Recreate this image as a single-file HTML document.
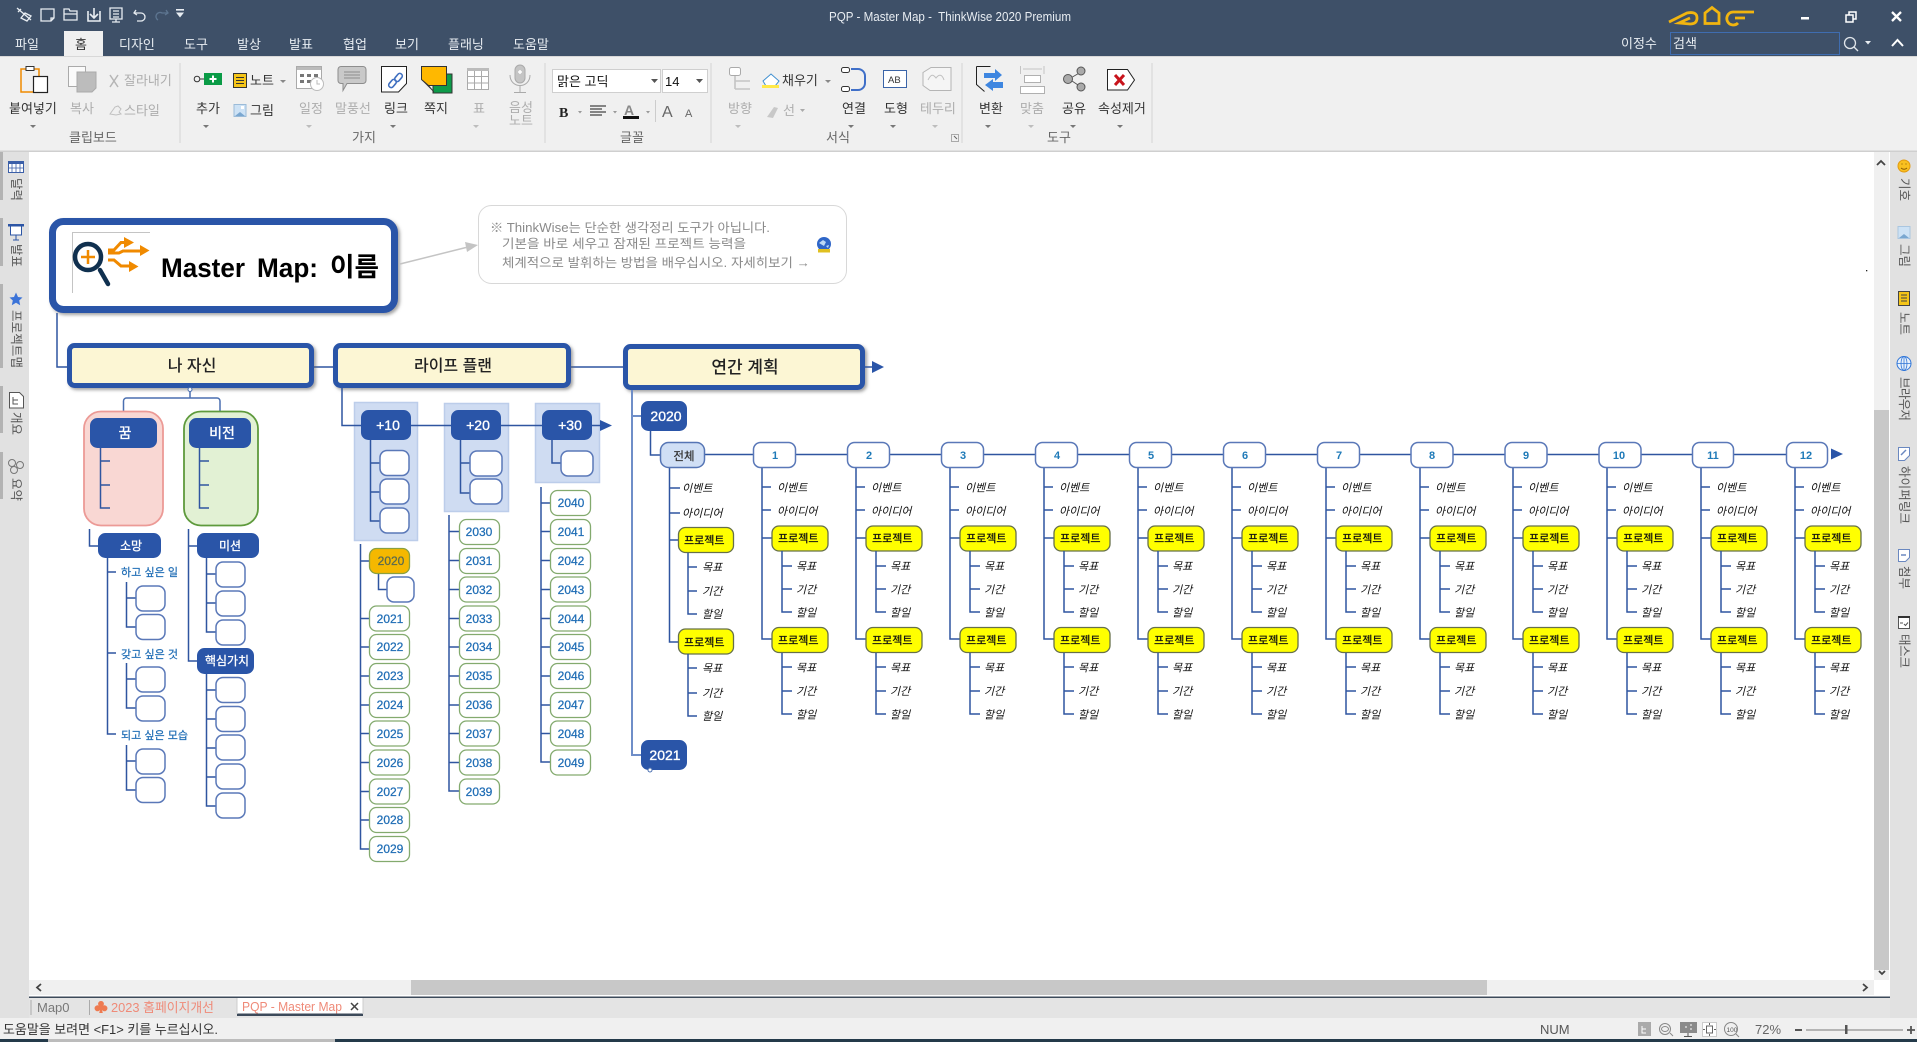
<!DOCTYPE html>
<html lang="ko"><head><meta charset="utf-8"><title>PQP - Master Map - ThinkWise 2020 Premium</title>
<style>
html,body{margin:0;padding:0;background:#fff;overflow:hidden}
svg{display:block;position:absolute;left:0;top:0}
text{font-family:"Liberation Sans","Noto Sans CJK KR",sans-serif;font-size:13px;fill:#333;white-space:pre}
.c{text-anchor:middle}
.m{fill:#e8edf2}
.g{fill:#adadad}
.lb{fill:#666}
.l{fill:none;stroke:#2f55a0;stroke-width:1.5}
.w{fill:#fff;stroke:#5a78b8;stroke-width:1.5;rx:7px}
.y{fill:#fff;stroke:#83aa6e;stroke-width:1.3;rx:7px}
.yt{font-size:12px;fill:#1f6db5;text-anchor:middle;stroke:#1f6db5;stroke-width:.25}
.n{fill:#2a55a8;stroke:#2a55a8;rx:7px}
.nt{fill:#fff;font-size:12px;text-anchor:middle;stroke:#fff;stroke-width:.3}
.nb{fill:#fff;font-size:14px;text-anchor:middle;stroke:#fff;stroke-width:.35}
.big{fill:#fcf6d4;stroke:#2a55a8;stroke-width:5;rx:5px;filter:url(#s)}
.bt{font-size:16px;fill:#222;text-anchor:middle;font-weight:500}
.i{font-size:11px;font-style:italic;fill:#111}
.p{fill:#ffff00;stroke:#66704a;stroke-width:1.3;rx:7px}
.pt{font-size:11px;fill:#111;stroke:#111;stroke-width:.25}
.bl{font-size:11px;fill:#1f6db5;stroke:#1f6db5;stroke-width:.2}
.nm{font-size:11px;fill:#1f7ab8;font-weight:bold;text-anchor:middle}
.call{font-size:12.5px;fill:#8a8a8a}
.sd{font-size:12.5px;fill:#555}
</style></head><body>
<svg width="1917" height="1042" viewBox="0 0 1917 1042" xmlns="http://www.w3.org/2000/svg">
<defs>
<filter id="s" x="-5%" y="-15%" width="112%" height="135%"><feDropShadow dx="2" dy="2" stdDeviation="1.5" flood-color="#666" flood-opacity=".6"/></filter>
<g id="col">
<path class="l" d="M762 467V639H772M762 487H771M762 510H771M762 538H772"/>
<text class="i" x="777" y="491.500">이벤트</text>
<text class="i" x="777" y="515">아이디어</text>
<rect class="p" x="772" y="526" width="56" height="25"/><text class="pt" x="778" y="542">프로젝트</text>
<path class="l" d="M782 551V612H792M782 566H792M782 589H792"/>
<text class="i" x="796" y="570">목표</text><text class="i" x="796" y="593.500">기간</text><text class="i" x="796" y="616.500">할일</text>
<rect class="p" x="772" y="627.500" width="56" height="25"/><text class="pt" x="778" y="644">프로젝트</text>
<path class="l" d="M782 653V714H792M782 667H792M782 691H792"/>
<text class="i" x="796" y="671.500">목표</text><text class="i" x="796" y="695">기간</text><text class="i" x="796" y="718.500">할일</text>
</g>
</defs>

<!-- canvas bg -->
<rect width="1917" height="1042" fill="#fff"/>
<!-- title bar -->
<rect width="1917" height="56" fill="#3e5068"/>
<!-- QAT -->
<g fill="none" stroke="#e8edf2" stroke-width="1.300">
<path d="M17 8l14 12M21 9l-3 3M25 13l-4 5 6 3 4-5z"/>
<path d="M41 9h13v9l-3 3H41zM51 21v-3h3"/>
<path d="M64 11v9h13v-9h-7l-1-2h-5zM64 14h13"/>
<path d="M88 11v10h12V11M94 8v10M90 14l4 4 4-4" stroke-width="1.600"/>
<path d="M110 8h12v11h-12zM116 19v3M112 22h8M113 11h6M113 14h6M113 17h6"/>
<path d="M136 10l-2 3 3 2M134 13h7a4 4 0 0 1 0 8h-4"/>
</g>
<path d="M166 10l2 3-3 2M168 13h-6a4 4 0 0 0-4 7" fill="none" stroke="#5d7590" stroke-width="1.300"/>
<path d="M176 9h8v1.600h-8zM176 12.500h8l-4 5z" fill="#e8edf2"/>
<!-- menu -->
<rect x="64" y="31" width="39" height="26" fill="#f0f0f0"/>
<text class="m" x="15" y="49">파일</text>
<text x="75" y="49">홈</text>
<text class="m" x="119" y="49">디자인</text>
<text class="m" x="184" y="49">도구</text>
<text class="m" x="237" y="49">발상</text>
<text class="m" x="289" y="49">발표</text>
<text class="m" x="343" y="49">협업</text>
<text class="m" x="395" y="49">보기</text>
<text class="m" x="448" y="49">플래닝</text>
<text class="m" x="513" y="49">도움말</text>
<text class="m" x="829" y="21" textLength="242" lengthAdjust="spacingAndGlyphs">PQP - Master Map -  ThinkWise 2020 Premium</text>
<!-- logo -->
<g fill="none" stroke="#f2b50f" stroke-width="2.800">
<path d="M1669 22L1687 13Q1697 11 1697 18Q1697 24 1690 24L1679 23L1690 18"/>
<path d="M1705 23.500V13l7-5.500 7 5.500v10.500z"/>
<path d="M1754 12H1733a6.500 6.500 0 1 0 5 11M1735 18h10"/>
</g>
<!-- window buttons -->
<rect x="1801" y="17" width="8" height="2.500" fill="#fff"/>
<path d="M1846 15h7v7h-7zM1849 15v-3h7v7h-3" fill="none" stroke="#fff" stroke-width="1.500"/>
<path d="M1892 12l9 9M1901 12l-9 9" stroke="#fff" stroke-width="2.300"/>
<text class="m" x="1621" y="48">이정수</text>
<rect x="1670.500" y="32.500" width="169" height="22" fill="#3e5068" stroke="#3f6db0"/>
<text class="m" x="1673" y="48">검색</text>
<circle cx="1850" cy="43" r="5.500" fill="none" stroke="#e0e5ea" stroke-width="1.300"/><path d="M1854 47l4 4" stroke="#e0e5ea" stroke-width="1.300"/>
<path d="M1865 41h6l-3 3.500z" fill="#e8edf2"/>
<path d="M1892 46l5.500-6 5.500 6" fill="none" stroke="#fff" stroke-width="2"/>

<!-- ribbon -->
<rect y="56" width="1917" height="1.500" fill="#d8d8d8"/>
<rect y="57" width="1917" height="94" fill="#f0f0f0"/>
<rect y="150.500" width="1917" height="1.500" fill="#cfcfcf"/>
<path d="M180 63v80M545 63v80M711 63v80M962 63v80M1152 63v80" stroke="#d4d4d4"/>
<!-- clipboard -->
<path d="M34 69h5v7M33 92H21V69h5" fill="none" stroke="#f08a00" stroke-width="1.500"/>
<rect x="26" y="66.500" width="8" height="4" fill="#fff" stroke="#333"/>
<rect x="33.500" y="76.500" width="14" height="16" fill="#fff" stroke="#222" stroke-width="1.200"/>
<text x="9" y="113">붙여넣기</text>
<!-- copy -->
<path d="M68.500 66.500h17v20h-17z" fill="#fafafa" stroke="#aaa"/>
<path d="M77 72h19v16l-4 4H77z" fill="#bcbcbc" stroke="#aaa"/>
<text class="g" x="70" y="113">복사</text>
<path d="M110 75l8 12M118 75l-8 12" stroke="#b5b5b5" stroke-width="1.500"/>
<text class="g" x="124" y="85">잘라내기</text>
<path d="M110 114l5-7 3-1 3 3-2 3 2 2-5 1z" fill="none" stroke="#c0c0c0"/>
<text class="g" x="124" y="115">스타일</text>
<text class="lb" x="69" y="142">클립보드</text>
<!-- add -->
<circle cx="197" cy="79" r="2.800" fill="none" stroke="#333"/><path d="M200 79h4" stroke="#333"/>
<rect x="204" y="73" width="18" height="12" fill="#0a9b46"/><path d="M213 75.500v7M209.500 79h7" stroke="#fff" stroke-width="2"/>
<text x="196" y="113">추가</text>
<rect x="233.500" y="73.500" width="13" height="14" fill="#f5c518" stroke="#333"/><path d="M236 77.500h8M236 80.500h8M236 83.500h8" stroke="#333"/>
<text x="250" y="85">노트</text>
<path d="M280 80h6l-3 3z" fill="#888"/>
<rect x="234" y="104.500" width="12" height="12" fill="#cde2f5" stroke="#9bbbd8"/><path d="M235 116l5-4 5 4z" fill="#7aa7d0"/><rect x="241" y="106" width="3" height="3" fill="#fff"/>
<text x="250" y="115">그림</text>
<!-- schedule -->
<rect x="296.500" y="66.500" width="25" height="22" fill="#fff" stroke="#aaa"/><rect x="297" y="67" width="24" height="3" fill="#bbb"/>
<path d="M300 74h4v3h-4zM307 74h4v3h-4zM314 74h4v3h-4zM300 80h4v3h-4zM307 80h4v3h-4z" fill="#777"/>
<circle cx="317" cy="84" r="6.500" fill="#fff" stroke="#bbb"/><path d="M317 80v4h3" fill="none" stroke="#bbb"/>
<text class="g" x="299" y="113">일정</text>
<path d="M341 66.500h22a3 3 0 0 1 3 3v11a3 3 0 0 1-3 3h-16l-4 7v-7h-2a3 3 0 0 1-3-3v-11a3 3 0 0 1 3-3z" fill="#c9c9c9" stroke="#8d8d8d"/>
<path d="M344 72h16M344 75h16M344 78h16" stroke="#8d8d8d"/>
<text class="g" x="335" y="113">말풍선</text>
<!-- link -->
<path d="M381.500 66.500h25v17l-8 8.500h-17z" fill="#fff" stroke="#222"/>
<rect x="396" y="73" width="5" height="9" rx="2.500" fill="none" stroke="#3f6fc0" stroke-width="1.600" transform="rotate(40 398.500 77.500)"/>
<rect x="390" y="79" width="5" height="9" rx="2.500" fill="none" stroke="#3f6fc0" stroke-width="1.600" transform="rotate(40 392.500 83.500)"/>
<text x="384" y="113">링크</text>
<!-- sticky -->
<rect x="433" y="74" width="19" height="19" fill="#0d9b4a" stroke="#333"/>
<path d="M421.500 66.500h25v19h-18l-7-6z" fill="#ffb800" stroke="#333"/>
<path d="M422 80l7 6 5 6z" fill="#fff" stroke="#333" stroke-width=".7"/>
<text x="424" y="113">쪽지</text>
<!-- table -->
<rect x="467.500" y="68.500" width="21" height="21" fill="#fff" stroke="#aaa"/><rect x="467" y="68" width="22" height="3" fill="#bbb"/>
<path d="M474.500 71v18M481.500 71v18M468 76.500h20M468 83h20" stroke="#aaa"/>
<text class="g" x="473" y="113">표</text>
<!-- mic -->
<rect x="515" y="65" width="10" height="18" rx="5" fill="#c5c5c5" stroke="#aaa"/><path d="M518 72h4M520 70v4" stroke="#fff" stroke-width="1.500"/>
<path d="M510 75c0 14 20 14 20 0M520 86v6M514 92.500h12" fill="none" stroke="#aaa"/>
<text class="g" x="509" y="112">음성</text><text class="g" x="509" y="125">노트</text>
<text class="lb" x="352" y="142">가지</text>
<!-- font boxes -->
<rect x="552.500" y="69.500" width="108" height="23" fill="#fff" stroke="#cfcfcf"/>
<rect x="662.500" y="69.500" width="45" height="23" fill="#fff" stroke="#cfcfcf"/>
<text x="557" y="86" style="fill:#111">맑은 고딕</text>
<text x="665" y="86" style="fill:#111">14</text>
<path d="M651 79h7l-3.500 4zM696 79h7l-3.500 4z" fill="#555"/>
<text x="559" y="117" style="font-family:'Liberation Serif',serif;font-weight:bold;font-size:14px;fill:#222">B</text>
<path d="M578 111h4l-2 2.500zM613 111h4l-2 2.500zM646 111h4l-2 2.500z" fill="#999"/>
<path d="M590 106h16M590 109h12M590 112h16M590 115h12" stroke="#444" stroke-width="1.200"/>
<text x="624" y="115" style="font-size:14px;font-weight:bold;fill:#888">A</text>
<rect x="623" y="116" width="16" height="3" fill="#111"/>
<path d="M655.500 100v22" stroke="#ccc"/>
<text x="662" y="117" style="font-size:16px;fill:#666">A</text>
<text x="685" y="117" style="font-size:11px;fill:#666">A</text>
<text class="lb" x="620" y="142">글꼴</text>
<!-- direction -->
<rect x="729.500" y="67.500" width="11" height="8" rx="2" fill="#fff" stroke="#aaa"/>
<path d="M735 76v13M735 81h15M735 89h15" stroke="#c4c4c4" stroke-width="1.600" fill="none"/>
<text class="g" x="728" y="113">방향</text>
<path d="M763 81l8-7 8 7-4 5h-9z" fill="#fff" stroke="#3f8fd0"/><rect x="762" y="85" width="17" height="3" fill="#ffe94a"/>
<text x="782" y="85">채우기</text>
<path d="M825 80h6l-3 3z" fill="#888"/>
<path d="M767 117l7-10 4 1-5 10z" fill="#c8c8c8"/>
<text class="g" x="783" y="115">선</text>
<path d="M800 109h5l-2.500 3z" fill="#aaa"/>
<text x="842" y="113">연결</text>
<rect x="841.500" y="67.500" width="8" height="5" rx="2" fill="#fff" stroke="#333"/><rect x="841.500" y="86.500" width="8" height="5" rx="2" fill="#fff" stroke="#333"/>
<path d="M851 69h7a7 7 0 0 1 7 7v7a7 7 0 0 1-7 7h-7" fill="none" stroke="#3f6fc8" stroke-width="2"/>
<rect x="883.500" y="70.500" width="23" height="17" fill="#fff" stroke="#3a64a8"/>
<text x="888" y="83" style="font-size:9.500px;fill:#333">AB</text>
<text x="884" y="113">도형</text>
<path d="M931 67.500h20v23h-21l-7-5v-13z" fill="#f5f5f5" stroke="#b5b5b5"/><path d="M928 80c3-6 5-6 8-2 3-4 6-4 8 2" fill="none" stroke="#c0c0c0"/>
<text class="g" x="920" y="113">테두리</text>
<text class="lb" x="826" y="142">서식</text>
<path d="M951.500 134.500h7v7h-7z" fill="none" stroke="#aaa"/><path d="M954 136l3 3" stroke="#666"/>
<!-- convert -->
<path d="M976.500 66.500h14M976.500 66.500v18l8 7" fill="none" stroke="#222"/>
<path d="M984 73h11v-4l7 6-7 6v-3h-11z" fill="#3e86e0"/><path d="M1003 82h-10v-3l-8 6 8 6v-3h10z" fill="#3e86e0"/>
<text x="979" y="113">변환</text>
<path d="M1020.500 66v8M1044 66v8M1023 69h19" stroke="#c4c4c4" fill="none"/>
<rect x="1024.500" y="75.500" width="16" height="7" fill="#fff" stroke="#b0b0b0"/><rect x="1020.500" y="86.500" width="24" height="7" fill="#fff" stroke="#b0b0b0"/>
<text class="g" x="1020" y="113">맞춤</text>
<path d="M1069 79l12-7M1069 79l12 8" stroke="#555"/>
<circle cx="1068" cy="79" r="4.500" fill="#aaa" stroke="#555"/><circle cx="1081" cy="71" r="4" fill="#aaa" stroke="#555"/><circle cx="1081" cy="87" r="4" fill="#aaa" stroke="#555"/>
<text x="1062" y="113">공유</text>
<path d="M1107.500 69.500h20l7 10.500-7 10h-20z" fill="#fff" stroke="#222"/>
<path d="M1115 75l9 10M1124 75l-9 10" stroke="#c8141c" stroke-width="3"/>
<text x="1098" y="113">속성제거</text>
<text class="lb" x="1047" y="142">도구</text>
<path d="M30 125h6l-3 3zM203 125h6l-3 3zM390 125h6l-3 3zM848 125h6l-3 3zM890 125h6l-3 3zM985 125h6l-3 3zM1070 125h6l-3 3zM1117 125h6l-3 3z" fill="#777"/>
<path d="M306 125h6l-3 3zM473 125h6l-3 3zM735 125h6l-3 3zM932 125h6l-3 3zM1028 125h6l-3 3z" fill="#bdbdbd"/>

<!-- left sidebar -->
<rect y="152" width="29" height="866" fill="#e1e1e1"/>
<path d="M0 152h3v48H0zM0 218h3v48H0zM0 284h3v84H0zM0 386h3v47H0zM0 452h3v47H0z" fill="#b3b3b3"/>
<rect x="8.500" y="161.500" width="15" height="11" fill="#fff" stroke="#3b5fa8"/><rect x="8" y="161" width="16" height="3" fill="#3b5fa8"/><path d="M12 164v8M16 164v8M20 164v8M9 168h14" stroke="#3b5fa8" stroke-width=".8"/>
<rect x="8" y="224" width="16" height="2.500" fill="#2c55a5"/><rect x="10.500" y="226" width="11" height="9" fill="#fff" stroke="#2c55a5"/><path d="M16 235v5M13 240h6" stroke="#2c55a5"/>
<path d="M16 292.500l2 4.500 4.500.5-3.300 3 1 4.700-4.200-2.400-4.200 2.400 1-4.700-3.300-3 4.500-.5z" fill="#3b73d8"/>
<path d="M9.500 392.500h10l4 4v11.500h-14z" fill="#fff" stroke="#555"/><path d="M13 397v7h5M13 400h5" fill="none" stroke="#555"/>
<g fill="none" stroke="#777"><circle cx="12" cy="463" r="3.500"/><circle cx="20" cy="465" r="3.500"/><circle cx="14" cy="470" r="3.500"/></g>
<text class="sd" transform="translate(12,178) rotate(90)">달력</text>
<text class="sd" transform="translate(12,244) rotate(90)">발표</text>
<text class="sd" transform="translate(12,310) rotate(90)" textLength="58">프로젝트맵</text>
<text class="sd" transform="translate(12,412) rotate(90)">개요</text>
<text class="sd" transform="translate(12,478) rotate(90)">요약</text>

<!-- right scrollbar + sidebar -->
<rect x="1874" y="152" width="15" height="828" fill="#f0f0f0"/>
<rect x="1874" y="410" width="15" height="560" fill="#c8c8c8"/>
<path d="M1877 165l4-4 4 4" fill="none" stroke="#444" stroke-width="1.800"/>
<path d="M1879 971l3 3 3-3" fill="none" stroke="#444" stroke-width="1.800"/>
<rect x="1866" y="270" width="1.300" height="1.300" fill="#222"/>
<rect x="1890" y="152" width="27" height="866" fill="#e1e1e1"/>
<circle cx="1904" cy="166" r="6" fill="#f9c020" stroke="#e29a10"/><path d="M1901 168q3 2.500 6 0" stroke="#8a5a00" fill="none"/><path d="M1901.500 164h1M1905.500 164h1" stroke="#8a5a00"/>
<rect x="1898" y="226.500" width="12" height="12" fill="#cde2f5" stroke="#aac6e0"/><path d="M1899 238l5-4 5 4z" fill="#7aa7d0"/>
<rect x="1898.500" y="291.500" width="11" height="14" fill="#f5c518" stroke="#444"/><path d="M1901 295h6M1901 298h6M1901 301h6" stroke="#444"/>
<circle cx="1904" cy="363.500" r="7" fill="#e8f1fb" stroke="#2f75d8"/><path d="M1897 363.500h14M1904 356.500v14" stroke="#2f75d8" stroke-width=".8"/><ellipse cx="1904" cy="363.500" rx="3" ry="7" fill="none" stroke="#2f75d8" stroke-width=".8"/>
<path d="M1898.500 447.500h11v8l-5 5h-6z" fill="#fff" stroke="#6a88c0"/><path d="M1901 455l5-5" stroke="#6a88c0" stroke-width="1.500"/>
<path d="M1898.500 549.500h11v8l-4 4h-7z" fill="#fff" stroke="#6a88c0"/><path d="M1901 555h5" stroke="#6a88c0" stroke-width="1.500"/>
<rect x="1898.500" y="617.500" width="11" height="11" fill="#fff" stroke="#555"/><path d="M1898 617h12" stroke="#333" stroke-width="2"/><path d="M1904 624l1.500 1.500 2.500-3M1900 623h3" stroke="#555" fill="none"/>
<text class="sd" transform="translate(1900,178) rotate(90)">기호</text>
<text class="sd" transform="translate(1900,244) rotate(90)">그림</text>
<text class="sd" transform="translate(1900,312) rotate(90)">노트</text>
<text class="sd" transform="translate(1900,377) rotate(90)" textLength="44">브라우저</text>
<text class="sd" transform="translate(1900,466) rotate(90)" textLength="58">하이퍼링크</text>
<text class="sd" transform="translate(1900,566) rotate(90)">첨부</text>
<text class="sd" transform="translate(1900,634) rotate(90)" textLength="34">태스크</text>

<!-- bottom scrollbar -->
<rect x="29" y="980" width="1845" height="15" fill="#f0f0f0"/>
<rect x="411" y="980" width="1076" height="15" fill="#c8c8c8"/>
<path d="M41 984l-4 3.500 4 3.500M1863 984l4 3.500-4 3.500" fill="none" stroke="#444" stroke-width="1.800"/>
<rect x="29" y="996.500" width="1861" height="1.500" fill="#3c4a5a"/>
<rect x="29" y="998" width="1861" height="20" fill="#e4e4e4"/>
<path d="M31 1000v15M89.500 1000v15" stroke="#aaa"/>
<text x="37" y="1012" style="fill:#777">Map0</text>
<path d="M101 1001a2.800 2.800 0 0 1 2.300 4.500 3 3 0 1 1-1.300 4.500l.8 3h-3.600l.8-3a3 3 0 1 1-1.300-4.500 2.800 2.800 0 0 1 2.300-4.500z" fill="#ee7a50"/>
<text x="111" y="1012" style="fill:#ef8a78" textLength="103" lengthAdjust="spacingAndGlyphs">2023 홈페이지개선</text>
<rect x="237" y="998" width="126" height="17" fill="#fff"/><rect x="237" y="1013.500" width="126" height="2.500" fill="#3c4a5a"/>
<path d="M237 998v16M363 998v16" stroke="#ccc"/>
<text x="242" y="1011" style="fill:#ef8a78" textLength="100" lengthAdjust="spacingAndGlyphs">PQP - Master Map</text>
<path d="M351 1003l7 7M358 1003l-7 7" stroke="#444" stroke-width="1.500"/>

<!-- status bar -->
<rect y="1018" width="1917" height="21" fill="#f0f0f0"/>
<rect y="1039" width="1917" height="3" fill="#243a4a"/><rect x="48" y="1039" width="287" height="3" fill="#bcbcbc"/>
<text x="3" y="1034" textLength="215" lengthAdjust="spacingAndGlyphs">도움말을 보려면 &lt;F1&gt; 키를 누르십시오.</text>
<text x="1540" y="1034" style="fill:#555">NUM</text>
<rect x="1638" y="1022" width="13" height="14" fill="#aaa"/><path d="M1642 1026v7h4M1642 1029h4" stroke="#fff" fill="none"/>
<circle cx="1665" cy="1029" r="5.500" fill="none" stroke="#888"/><ellipse cx="1665" cy="1029" rx="3.500" ry="2.500" fill="none" stroke="#888"/><path d="M1670 1033l3 3" stroke="#888"/>
<rect x="1680" y="1022" width="17" height="11" fill="#8a8a8a"/><path d="M1688 1033v3M1684 1036.500h8" stroke="#555"/><path d="M1685 1027h2M1690 1025h2M1690 1029h2" stroke="#fff"/>
<rect x="1702.500" y="1022.500" width="14" height="14" fill="#fff" stroke="#ccc"/><rect x="1706.500" y="1026" width="6" height="7" fill="none" stroke="#666"/><path d="M1709.500 1023v2M1709.500 1034v2M1703 1029.500h2M1714 1029.500h2" stroke="#666"/>
<circle cx="1731" cy="1029" r="6.500" fill="none" stroke="#888"/><text x="1726.500" y="1032" style="font-size:6.500px;fill:#555">100</text><path d="M1736 1034l3 3" stroke="#888"/>
<text x="1755" y="1034" style="fill:#666">72%</text>
<rect x="1795" y="1029" width="7" height="2" fill="#555"/>
<rect x="1806" y="1029.500" width="97" height="1" fill="#777"/><rect x="1845" y="1025" width="2.500" height="9" fill="#555"/>
<path d="M1907 1030h8M1911 1026v8" stroke="#555" stroke-width="1.800"/>

<!-- ROOT -->
<path class="l" d="M57 313V367H67M314 367H333M571 367H623" />
<rect x="52.500" y="221.500" width="342" height="88" rx="11" fill="#fff" stroke="#2a55a8" stroke-width="7" filter="url(#s)"/>
<path d="M72.500 293V232.500H150" fill="none" stroke="#c4c4c4"/>
<circle cx="88" cy="257" r="13" fill="none" stroke="#10304f" stroke-width="4.500"/>
<path d="M100 270l8 14" stroke="#10304f" stroke-width="4.500" stroke-linecap="round"/>
<path d="M88 250v14M81 257h14" stroke="#f08a00" stroke-width="2.500"/>
<g fill="none" stroke="#f08a00" stroke-width="3">
<path d="M108 250L114 250L121 242.500H126"/>
<path d="M108 253H119L123 251H141"/>
<path d="M108 260H114L121 266H130"/>
</g>
<path d="M124 237l10 5.500-10 5.500zM140 245l9.500 5.500-9.500 5.500zM129 261l9.500 5.500-9.500 5.500z" fill="#f08a00"/>
<text x="161" y="277" style="font-size:27px;font-weight:bold;fill:#000" textLength="84" lengthAdjust="spacingAndGlyphs">Master</text>
<text x="257" y="277" style="font-size:27px;font-weight:bold;fill:#000" textLength="61" lengthAdjust="spacingAndGlyphs">Map:</text>
<text x="330" y="276" style="font-size:26px;font-weight:bold;fill:#000" textLength="49" lengthAdjust="spacingAndGlyphs">이름</text>

<!-- callout -->
<path d="M400 264L468 247" stroke="#c4c4c4" stroke-width="1.500"/><path d="M478 245l-13-3 2 10z" fill="#c4c4c4"/>
<rect x="478.500" y="205.500" width="368" height="78" rx="13" fill="#fff" stroke="#d8d8d8"/>
<text class="call" x="490" y="232" textLength="280" lengthAdjust="spacingAndGlyphs">※ ThinkWise는 단순한 생각정리 도구가 아닙니다.</text>
<text class="call" x="502" y="248" textLength="244" lengthAdjust="spacingAndGlyphs">기본을 바로 세우고 잠재된 프로젝트 능력을</text>
<text class="call" x="502" y="267" textLength="308" lengthAdjust="spacingAndGlyphs">체계적으로 발휘하는 방법을 배우십시오. 자세히보기 →</text>
<circle cx="824" cy="244" r="7" fill="#2f66c8"/><path d="M819 243l4-3 3 2-2 4zM826 246l3-1-1 3z" fill="#bcd8f5"/><rect x="818" y="249" width="12" height="3.500" fill="#e0c020"/>

<!-- 나 자신 -->
<rect class="big" x="69.500" y="345.500" width="242" height="40"/>
<text class="bt" x="192" y="371">나 자신</text>
<rect class="big" x="335.500" y="345.500" width="233" height="40"/>
<text class="bt" x="453" y="371">라이프 플랜</text>
<rect class="big" x="625.500" y="346.500" width="237" height="41"/>
<text class="bt" x="745" y="373" style="font-size:17px">연간 계획</text>
<path class="l" d="M865 367H873"/><path d="M872 361l12 6-12 6z" fill="#2a55a8"/>

<circle cx="190" cy="389.500" r="2" fill="#fff" stroke="#4a6fb0"/>
<path d="M190 391v7M123.500 411V401a3 3 0 0 1 3-3H217a3 3 0 0 1 3 3V411" fill="none" stroke="#4a6fb0" stroke-width="1.500"/>
<rect x="84" y="411.500" width="79" height="114" rx="17" fill="#f9d7d3" stroke="#ec9a96" stroke-width="1.800"/>
<rect x="184" y="411.500" width="74" height="114" rx="17" fill="#e2f1d4" stroke="#5e9a3c" stroke-width="1.800"/>
<rect class="n" x="90.500" y="418.500" width="66" height="29"/><text class="nb" x="125" y="438">꿈</text>
<rect class="n" x="189.500" y="418.500" width="61" height="29"/><text class="nb" x="222" y="438">비전</text>
<path class="l" d="M100.500 448V508H110M100.500 461H110M100.500 485H110M199.500 448V508H209M199.500 461H209M199.500 485H209"/>

<!-- 소망 -->
<path class="l" d="M89.500 529V546H98M188.500 529V661H197M188.500 546H197"/>
<rect class="n" x="98.500" y="533.500" width="62" height="24"/><text class="nt" x="131" y="550">소망</text>
<rect class="n" x="197.500" y="533.500" width="61" height="24"/><text class="nt" x="230" y="550">미션</text>
<rect class="n" x="197.500" y="648.500" width="56" height="25"/><text class="nt" x="227" y="665">핵심가치</text>
<path class="l" d="M107.500 558V734H116M107.500 572H116M107.500 653H116"/>
<text class="bl" x="121" y="576" textLength="57" lengthAdjust="spacing">하고 싶은 일</text>
<text class="bl" x="121" y="658" textLength="57" lengthAdjust="spacing">갖고 싶은 것</text>
<text class="bl" x="121" y="739" textLength="67" lengthAdjust="spacing">되고 싶은 모습</text>
<path class="l" d="M126.500 582V627H136M126.500 598H136M126.500 663V708H136M126.500 679H136M126.500 745V790H136M126.500 761H136"/>
<rect class="w" x="136" y="586" width="29" height="25"/><rect class="w" x="136" y="614.500" width="29" height="25"/>
<rect class="w" x="136" y="667" width="29" height="25"/><rect class="w" x="136" y="696" width="29" height="25"/>
<rect class="w" x="136" y="749" width="29" height="25"/><rect class="w" x="136" y="777.500" width="29" height="25"/>
<path class="l" d="M206.500 558V632H216M206.500 574H216M206.500 603H216M206.500 674V806H216M206.500 690H216M206.500 719H216M206.500 748H216M206.500 777H216"/>
<rect class="w" x="216" y="562" width="29" height="25"/><rect class="w" x="216" y="591" width="29" height="25"/><rect class="w" x="216" y="620" width="29" height="25"/>
<rect class="w" x="216" y="677.500" width="29" height="25"/><rect class="w" x="216" y="706.500" width="29" height="25"/><rect class="w" x="216" y="735" width="29" height="25"/><rect class="w" x="216" y="764" width="29" height="25"/><rect class="w" x="216" y="793" width="29" height="25"/>

<!-- +10 +20 +30 -->
<rect x="354.500" y="402.500" width="63" height="138" fill="#cfdcf2" stroke="#bccdea" stroke-width="1.500"/>
<rect x="444.500" y="403.500" width="64" height="108" fill="#cfdcf2" stroke="#bccdea" stroke-width="1.500"/>
<rect x="535.500" y="403.500" width="64" height="79" fill="#cfdcf2" stroke="#bccdea" stroke-width="1.500"/>
<path class="l" d="M342 388V425.500H361M411 425.500H451M501 425.500H542M592 425.500H601"/>
<path d="M600 420l12 5.500-12 5.500z" fill="#2a55a8"/>
<rect class="n" x="361.500" y="410.500" width="49" height="29"/><text class="nb" x="388" y="430">+10</text>
<rect class="n" x="451.500" y="410.500" width="49" height="29"/><text class="nb" x="478" y="430">+20</text>
<rect class="n" x="542.500" y="410.500" width="49" height="29"/><text class="nb" x="570" y="430">+30</text>
<path class="l" d="M370.500 440V521H380M370.500 463H380M370.500 492H380M460.500 440V493H470M460.500 463H470M552 440V463H562"/>
<rect class="w" x="380" y="450.500" width="29" height="25"/><rect class="w" x="380" y="479" width="29" height="25"/><rect class="w" x="380" y="508" width="29" height="25"/>
<rect class="w" x="470" y="451" width="32" height="25"/><rect class="w" x="470" y="479" width="32" height="25"/>
<rect class="w" x="561" y="451" width="32" height="25"/>

<!-- year columns -->
<path class="l" d="M360.500 544V849H369M360.500 561H369M360.500 618.500H369M360.500 647H369M360.500 676H369M360.500 705H369M360.500 733.500H369M360.500 762.500H369M360.500 791.500H369M360.500 820H369"/>
<path class="l" d="M378.500 573V589.500H387"/>
<rect x="369.500" y="548.500" width="40" height="25" rx="7" fill="#f5b800" stroke="#8aa040" stroke-width="1.300"/><text class="yt" x="391" y="565" style="fill:#5a6a50;stroke:#5a6a50">2020</text>
<rect class="w" x="387" y="577" width="27" height="25"/>
<rect class="y" x="369.500" y="606" width="40" height="25"/><text class="yt" x="390" y="623">2021</text>
<rect class="y" x="369.500" y="634.500" width="40" height="25"/><text class="yt" x="390" y="651">2022</text>
<rect class="y" x="369.500" y="663.500" width="40" height="25"/><text class="yt" x="390" y="680">2023</text>
<rect class="y" x="369.500" y="692.500" width="40" height="25"/><text class="yt" x="390" y="709">2024</text>
<rect class="y" x="369.500" y="721" width="40" height="25"/><text class="yt" x="390" y="738">2025</text>
<rect class="y" x="369.500" y="750" width="40" height="25"/><text class="yt" x="390" y="767">2026</text>
<rect class="y" x="369.500" y="779" width="40" height="25"/><text class="yt" x="390" y="796">2027</text>
<rect class="y" x="369.500" y="807.500" width="40" height="25"/><text class="yt" x="390" y="824">2028</text>
<rect class="y" x="369.500" y="836.500" width="40" height="25"/><text class="yt" x="390" y="853">2029</text>

<path class="l" d="M449 515V791H459M449 531.500H459M449 560.500H459M449 589.500H459M449 618.500H459M449 647H459M449 676H459M449 705H459M449 733.500H459M449 762.500H459"/>
<rect class="y" x="459.500" y="519.500" width="40" height="25"/><text class="yt" x="479" y="536">2030</text>
<rect class="y" x="459.500" y="548.500" width="40" height="25"/><text class="yt" x="479" y="565">2031</text>
<rect class="y" x="459.500" y="577" width="40" height="25"/><text class="yt" x="479" y="594">2032</text>
<rect class="y" x="459.500" y="606" width="40" height="25"/><text class="yt" x="479" y="623">2033</text>
<rect class="y" x="459.500" y="634.500" width="40" height="25"/><text class="yt" x="479" y="651">2034</text>
<rect class="y" x="459.500" y="663.500" width="40" height="25"/><text class="yt" x="479" y="680">2035</text>
<rect class="y" x="459.500" y="692.500" width="40" height="25"/><text class="yt" x="479" y="709">2036</text>
<rect class="y" x="459.500" y="721" width="40" height="25"/><text class="yt" x="479" y="738">2037</text>
<rect class="y" x="459.500" y="750" width="40" height="25"/><text class="yt" x="479" y="767">2038</text>
<rect class="y" x="459.500" y="779" width="40" height="25"/><text class="yt" x="479" y="796">2039</text>

<path class="l" d="M541 487V762H550M541 503H550M541 531.500H550M541 560.500H550M541 589.500H550M541 618.500H550M541 647H550M541 676H550M541 705H550M541 733.500H550"/>
<rect class="y" x="550.500" y="490.500" width="40" height="25"/><text class="yt" x="571" y="507">2040</text>
<rect class="y" x="550.500" y="519.500" width="40" height="25"/><text class="yt" x="571" y="536">2041</text>
<rect class="y" x="550.500" y="548.500" width="40" height="25"/><text class="yt" x="571" y="565">2042</text>
<rect class="y" x="550.500" y="577" width="40" height="25"/><text class="yt" x="571" y="594">2043</text>
<rect class="y" x="550.500" y="606" width="40" height="25"/><text class="yt" x="571" y="623">2044</text>
<rect class="y" x="550.500" y="634.500" width="40" height="25"/><text class="yt" x="571" y="651">2045</text>
<rect class="y" x="550.500" y="663.500" width="40" height="25"/><text class="yt" x="571" y="680">2046</text>
<rect class="y" x="550.500" y="692.500" width="40" height="25"/><text class="yt" x="571" y="709">2047</text>
<rect class="y" x="550.500" y="721" width="40" height="25"/><text class="yt" x="571" y="738">2048</text>
<rect class="y" x="550.500" y="750" width="40" height="25"/><text class="yt" x="571" y="767">2049</text>

<!-- annual plan -->
<path d="M632 390V755H641M632 416H641" fill="none" stroke="#6f8ec8" stroke-width="2"/>
<rect class="n" x="641.500" y="401.500" width="45" height="29"/><text class="nb" x="666" y="421">2020</text>
<rect class="n" x="641.500" y="740.500" width="45" height="29"/><text class="nb" x="665" y="760">2021</text>
<circle cx="650" cy="770" r="2" fill="#fff" stroke="#4a6fb0"/>
<path class="l" d="M650.500 431V455H660M705 454.500H1827"/>
<path d="M1831 448.500l12 5.500-12 5.500z" fill="#2a55a8"/>

<!-- 전체 -->
<path class="l" d="M669.500 468V642H678M669.500 488H680M669.500 513H680M669.500 540H678"/>
<rect x="660.500" y="442.500" width="44" height="25" rx="8" fill="#d0dff5" stroke="#5575b5" stroke-width="1.500"/>
<text x="684" y="460" class="c" style="font-size:11.500px;fill:#333;stroke:#333;stroke-width:.25">전체</text>
<text class="i" x="682" y="492">이벤트</text><text class="i" x="682" y="517">아이디어</text>
<rect class="p" x="678.500" y="527.500" width="55" height="25"/><text class="pt" x="684" y="544">프로젝트</text>
<path class="l" d="M688 553V614H697M688 567H697M688 591H697"/>
<text class="i" x="702" y="571">목표</text><text class="i" x="702" y="595">기간</text><text class="i" x="702" y="618">할일</text>
<rect class="p" x="678.500" y="629" width="55" height="25"/><text class="pt" x="684" y="646">프로젝트</text>
<path class="l" d="M688 654V716H697M688 668H697M688 693H697"/>
<text class="i" x="702" y="672">목표</text><text class="i" x="702" y="697">기간</text><text class="i" x="702" y="720">할일</text>

<!-- month columns -->
<use href="#col"/>
<use href="#col" x="94"/>
<use href="#col" x="188"/>
<use href="#col" x="282"/>
<use href="#col" x="376"/>
<use href="#col" x="470"/>
<use href="#col" x="564"/>
<use href="#col" x="658"/>
<use href="#col" x="751"/>
<use href="#col" x="845"/>
<use href="#col" x="939"/>
<use href="#col" x="1033"/>
<g>
<rect class="w" x="753.500" y="442.500" width="42" height="25"/><text class="nm" x="775" y="459">1</text>
<rect class="w" x="847.500" y="442.500" width="42" height="25"/><text class="nm" x="869" y="459">2</text>
<rect class="w" x="941.500" y="442.500" width="42" height="25"/><text class="nm" x="963" y="459">3</text>
<rect class="w" x="1035.500" y="442.500" width="42" height="25"/><text class="nm" x="1057" y="459">4</text>
<rect class="w" x="1129.500" y="442.500" width="42" height="25"/><text class="nm" x="1151" y="459">5</text>
<rect class="w" x="1223.500" y="442.500" width="42" height="25"/><text class="nm" x="1245" y="459">6</text>
<rect class="w" x="1317.500" y="442.500" width="42" height="25"/><text class="nm" x="1339" y="459">7</text>
<rect class="w" x="1411" y="442.500" width="42" height="25"/><text class="nm" x="1432" y="459">8</text>
<rect class="w" x="1505" y="442.500" width="42" height="25"/><text class="nm" x="1526" y="459">9</text>
<rect class="w" x="1599" y="442.500" width="42" height="25"/><text class="nm" x="1619" y="459">10</text>
<rect class="w" x="1692.500" y="442.500" width="41" height="25"/><text class="nm" x="1713" y="459">11</text>
<rect class="w" x="1786.500" y="442.500" width="41" height="25"/><text class="nm" x="1806" y="459">12</text>
</g>
</svg>
</body></html>
